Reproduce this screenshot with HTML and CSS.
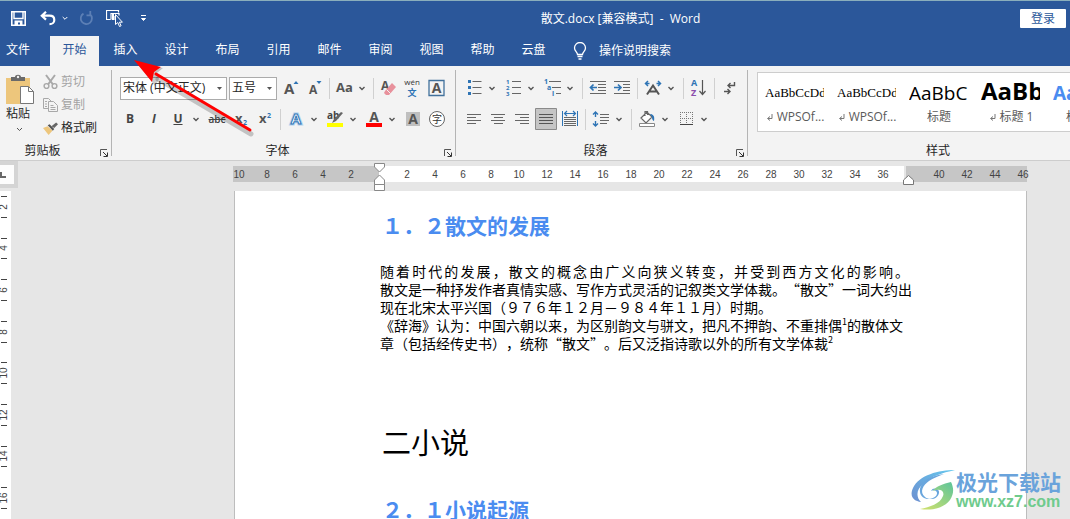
FILE: index.html
```html
<!DOCTYPE html>
<html lang="zh-CN">
<head>
<meta charset="utf-8">
<title>散文.docx - Word</title>
<link rel="stylesheet" href="styles.css">
</head>
<body>
<svg class="defs" aria-hidden="true">
  <symbol id="chev" viewBox="0 0 15 24"><path d="M3.5 11l2.5 2.500 2.500-2.500" fill="none" stroke="#555" stroke-width="1.400"/></symbol>
  <symbol id="launch" viewBox="0 0 10 10"><path d="M1.500 8V1.500H8" fill="none" stroke="#555"/><path d="M4 4l4 4M8.500 4.500v4h-4" fill="none" stroke="#333"/></symbol>
  <symbol id="ret" viewBox="0 0 8 9"><path d="M6 1v4.500H2M4 3.500l-2.500 2L4 7.500" fill="none" stroke="#777"/></symbol>
</svg>

<header class="titlebar">
  <div class="quick">
    <button class="q" aria-label="保存"><svg width="15" height="15" viewBox="0 0 15 15"><path d="M.8.800h13.400v13.400H.8z" fill="none" stroke="#fff" stroke-width="1.600"/><path d="M3 1v6.500h9V1" fill="none" stroke="#fff" stroke-width="1.400"/><path d="M3.500 9.500h8V14H9v-2.500H7V14H3.500z" fill="#fff"/></svg></button>
    <button class="q undo" aria-label="撤消"><svg width="16" height="15" viewBox="0 0 16 15"><path d="M6 .8L1.800 4.700 6 8.600M2 4.700h7.500c3 0 4.800 1.700 4.800 4.200S12.300 13.200 9.500 13.200" fill="none" stroke="#fff" stroke-width="2.200"/></svg></button>
    <button class="q small" aria-label="撤消选项"><svg width="6" height="5" viewBox="0 0 6 5"><path d="M.7 1l2.300 2.300L5.300 1" fill="none" stroke="#fff"/></svg></button>
    <button class="q redo" aria-label="重复"><svg width="15" height="15" viewBox="0 0 15 15"><path d="M4.500 2.600A5.600 5.600 0 1 0 11 3.200M11.300 0v4.300H7.500" fill="none" stroke="#5c7fb5" stroke-width="1.800"/></svg></button>
    <button class="q touch" aria-label="选择对象"><svg width="18" height="17" viewBox="0 0 18 17"><path d="M4.500 9.500h-4v-9h12v2M5 9.500v-6h8v2M8 6v4" fill="none" stroke="#fff" stroke-width="1.200"/><path d="M6 4h2v6H6z" fill="#fff"/><path d="M9.500 4.500v10l2.300-2 1.700 4 1.600-.7-1.700-3.600h3z" fill="#2b579a" stroke="#fff"/></svg></button>
    <button class="q small" aria-label="自定义快速访问工具栏"><svg width="7" height="7" viewBox="0 0 7 7"><path d="M1 .5h5M1.500 3.500h4L3.500 5.500z" fill="#fff" stroke="#fff"/></svg></button>
  </div>
  <div class="doc-title">散文.docx [兼容模式]&nbsp; -&nbsp; Word</div>
  <button class="login">登录</button>
</header>

<nav class="tabs">
  <button class="tab file">文件</button>
  <button class="tab active">开始</button>
  <button class="tab">插入</button>
  <button class="tab">设计</button>
  <button class="tab">布局</button>
  <button class="tab">引用</button>
  <button class="tab">邮件</button>
  <button class="tab">审阅</button>
  <button class="tab">视图</button>
  <button class="tab">帮助</button>
  <button class="tab">云盘</button>
  <button class="tell"><svg width="14" height="18" viewBox="0 0 14 18"><path d="M4.500 12.500c0-2.500-3-3.500-3-6.500a5.500 5.500 0 0 1 11 0c0 3-3 4-3 6.500zM4.500 14.500h5M5.500 17h3" fill="none" stroke="#fff" stroke-width="1.300"/></svg>操作说明搜索</button>
</nav>

<section class="ribbon">
  <div class="group clipboard">
    <div class="clip-body">
      <button class="paste">
        <svg width="28" height="31" viewBox="0 0 28 31"><path d="M0 4h24v26H0z" fill="#edc67c"/><path d="M5 7V3h4c0-3 6-3 6 0h4v4z" fill="#6a6a6a"/><circle cx="12" cy="3" r="1.200" fill="#f3f3f3"/><path d="M14.500 12.500h8l5 5v12h-13z" fill="#fff" stroke="#777"/><path d="M22.500 12.500v5h5" fill="none" stroke="#777"/></svg>
        <span>粘贴</span>
        <svg width="7" height="5" viewBox="0 0 7 5"><path d="M1 1l2.500 2.500L6 1" fill="none" stroke="#555"/></svg>
      </button>
      <div class="clip-list">
        <button class="clip" disabled><svg width="15" height="16" viewBox="0 0 15 16"><path d="M3 1l7 9.500M12 1L5 10.500" fill="none" stroke="#a8a8a8" stroke-width="2"/><circle cx="3.500" cy="12" r="2.400" fill="none" stroke="#a8a8a8" stroke-width="1.400"/><circle cx="11.500" cy="12" r="2.400" fill="none" stroke="#a8a8a8" stroke-width="1.400"/></svg>剪切</button>
        <button class="clip" disabled><svg width="15" height="16" viewBox="0 0 15 16"><path d="M5.500 11.500h-5v-10h5l3 3" fill="none" stroke="#a8a8a8"/><path d="M5.500 4.500h5l4 4v6h-9z" fill="#f3f3f3" stroke="#a8a8a8"/><path d="M2 4.500h2M2 7h2M2 9.500h2M7.500 8.500h3M7.500 10.500h5M7.500 12.500h5" stroke="#a8a8a8"/></svg>复制</button>
        <button class="clip"><svg width="16" height="15" viewBox="0 0 16 15"><path d="M0 7l5-2 5 5-4 4.500z" fill="#edc67c"/><path d="M5 4l2-1 5 5-1.500 2z" fill="#555"/><path d="M9 5l5-4 2 2-4 4z" fill="#666"/></svg>格式刷</button>
      </div>
    </div>
    <div class="foot"><span class="foot-label">剪贴板</span><button class="launch" aria-label="剪贴板选项"><svg width="10" height="10"><use href="#launch"/></svg></button></div>
  </div>

  <div class="group font">
    <div class="rows">
      <div class="row row-font">
        <label class="combo family"><select aria-label="字体"><option>宋体 (中文正文)</option></select><svg width="5" height="3" viewBox="0 0 5 3"><path d="M0 0h5L2.500 3z" fill="#555"/></svg></label>
        <label class="combo size"><select aria-label="字号"><option>五号</option></select><svg width="5" height="3" viewBox="0 0 5 3"><path d="M0 0h5L2.500 3z" fill="#555"/></svg></label>
        <button class="b" aria-label="增大字号"><svg width="24" height="24"><text class="ico" x="5" y="18" font-size="15">A</text><path d="M14.500 8h5L17 5z" fill="#2e74b5"/></svg></button>
        <button class="b" aria-label="减小字号"><svg width="24" height="24"><text class="ico" x="6" y="18" font-size="12">A</text><path d="M13.500 5h5L16 8z" fill="#2e74b5"/></svg></button>
        <i class="sep"></i>
        <button class="b" aria-label="更改大小写"><svg width="24" height="24"><text class="ico" x="4" y="16" font-size="13">Aa</text></svg></button>
        <button class="c" aria-label="大小写选项"><svg width="15" height="24"><use href="#chev"/></svg></button>
        <i class="sep"></i>
        <button class="b" aria-label="清除格式"><svg width="24" height="24"><text class="ico" x="5" y="14" font-size="12">A</text><path d="M9 15l7-8 4 4-7 8h-3l-2-2z" fill="#e8919c"/><path d="M10.500 13.500l4 4" stroke="#f3f3f3"/></svg></button>
        <button class="b" aria-label="拼音指南"><svg width="24" height="24"><text x="12" y="9" font-size="8" text-anchor="middle" fill="#333">wén</text><text x="12" y="20" font-size="9" font-weight="700" text-anchor="middle" fill="#2e74b5">文</text></svg></button>
        <button class="b" aria-label="字符边框"><svg width="24" height="24"><path d="M5 4.500h15v15H5z" fill="none" stroke="#41719c" stroke-width="1.300"/><text class="ico" x="12.500" y="17" font-size="14" text-anchor="middle">A</text></svg></button>
      </div>
      <div class="row row-format">
        <button class="b"><b>B</b></button>
        <button class="b"><em>I</em></button>
        <button class="b"><u>U</u></button>
        <button class="c" aria-label="下划线选项"><svg width="15" height="24"><use href="#chev"/></svg></button>
        <button class="b"><s>abc</s></button>
        <button class="b" aria-label="下标"><svg width="24" height="24"><text class="ico" x="6" y="16" font-size="13">x</text><text x="14" y="18" font-size="7" font-weight="700" fill="#2e74b5">2</text></svg></button>
        <button class="b" aria-label="上标"><svg width="24" height="24"><text class="ico" x="6" y="16" font-size="13">x</text><text x="14" y="11" font-size="7" font-weight="700" fill="#2e74b5">2</text></svg></button>
        <i class="sep"></i>
        <button class="b" aria-label="文本效果"><svg width="24" height="24"><text x="12" y="17" font-size="15" font-weight="700" text-anchor="middle" fill="#fff" stroke="#b4d2ee" stroke-width="3">A</text><text x="12" y="17" font-size="15" font-weight="700" text-anchor="middle" fill="#fff" stroke="#2e74b5" stroke-width="1">A</text></svg></button>
        <button class="c" aria-label="文本效果选项"><svg width="15" height="24"><use href="#chev"/></svg></button>
        <button class="b" aria-label="突出显示"><svg width="24" height="24"><path d="M4 16h16v4H4z" fill="#ff0"/><text x="4" y="12" font-size="10" font-weight="700" fill="#444">ab</text><path d="M18 5l2 1-7 8-4 2 2-4z" fill="#666"/></svg></button>
        <button class="c" aria-label="突出显示选项"><svg width="15" height="24"><use href="#chev"/></svg></button>
        <button class="b" aria-label="字体颜色"><svg width="24" height="24"><text class="ico" x="12" y="15" font-size="14" text-anchor="middle">A</text><path d="M4 16h16v4H4z" fill="red"/></svg></button>
        <button class="c" aria-label="字体颜色选项"><svg width="15" height="24"><use href="#chev"/></svg></button>
        <button class="b" aria-label="字符底纹"><svg width="24" height="24"><path d="M5 5h14v14H5z" fill="#bfbfbf"/><text class="ico" x="12" y="17" font-size="14" text-anchor="middle">A</text></svg></button>
        <button class="b" aria-label="带圈字符"><svg width="24" height="24"><circle cx="12" cy="12" r="7.500" fill="#fff" stroke="#666"/><text x="12" y="15.500" font-size="10" text-anchor="middle" fill="#333">字</text></svg></button>
      </div>
    </div>
    <div class="foot"><span class="foot-label">字体</span><button class="launch" aria-label="字体选项"><svg width="10" height="10"><use href="#launch"/></svg></button></div>
  </div>

  <div class="group para">
    <div class="rows">
      <div class="row">
        <button class="b" aria-label="项目符号"><svg width="24" height="24"><path d="M10.500 5.500h9M10.500 11.500h9M10.500 17.500h9" stroke="#666"/><path d="M6 4h3v3H6zM6 10h3v3H6zM6 16h3v3H6z" fill="#2e74b5"/></svg></button>
        <button class="c" aria-label="项目符号选项"><svg width="15" height="24"><use href="#chev"/></svg></button>
        <button class="b" aria-label="编号"><svg width="24" height="24"><path d="M11 5.500h9M11 11.500h9M11 17.500h9" stroke="#666"/><g font-size="6" font-weight="700" fill="#2e74b5"><text x="5" y="8">1</text><text x="5" y="14">2</text><text x="5" y="20">3</text></g></svg></button>
        <button class="c" aria-label="编号选项"><svg width="15" height="24"><use href="#chev"/></svg></button>
        <button class="b" aria-label="多级列表"><svg width="24" height="24"><path d="M9 5.500h12M12 11.500h9M16 17.500h5" stroke="#666"/><g font-size="7" font-weight="700" fill="#2e74b5"><text x="4" y="8">1</text><text x="7" y="14">a</text><text x="12" y="20">i</text></g></svg></button>
        <button class="c" aria-label="多级列表选项"><svg width="15" height="24"><use href="#chev"/></svg></button>
        <i class="sep"></i>
        <button class="b" aria-label="减少缩进"><svg width="24" height="24"><path d="M4 5.500h16M12 8.500h8M12 11.500h8M12 14.500h8M4 17.500h16" stroke="#666"/><path d="M5 11.500h6M7.500 8.500l-3 3 3 3" fill="none" stroke="#2e74b5" stroke-width="1.700"/></svg></button>
        <button class="b" aria-label="增加缩进"><svg width="24" height="24"><path d="M4 5.500h16M13 8.500h7M13 11.500h7M13 14.500h7M4 17.500h16" stroke="#666"/><path d="M4 11.500h6M8 8.500l3 3-3 3" fill="none" stroke="#2e74b5" stroke-width="1.700"/></svg></button>
        <i class="sep"></i>
        <button class="b" aria-label="中文版式"><svg width="24" height="24"><path d="M6 18.500l6-9 6 9M8.500 15.500h7" fill="none" stroke="#555" stroke-width="2"/><path d="M4.500 7.500h4M7 5L4.500 7.500 7 10M19.500 7.500h-4M17 5l2.500 2.500L17 10" fill="none" stroke="#2e74b5" stroke-width="1.500"/></svg></button>
        <button class="c" aria-label="中文版式选项"><svg width="15" height="24"><use href="#chev"/></svg></button>
        <i class="sep"></i>
        <button class="b" aria-label="排序"><svg width="24" height="24"><text x="4" y="10" font-size="9" font-weight="700" fill="#2e74b5">A</text><text x="4" y="20" font-size="9" font-weight="700" fill="#8b4fad">Z</text><path d="M15.500 4v14M12.500 15l3 3.500 3-3.500" fill="none" stroke="#555" stroke-width="1.200"/></svg></button>
        <i class="sep"></i>
        <button class="b" aria-label="显示编辑标记"><svg width="24" height="24"><path d="M16.500 6v3.500h-6M12.500 7L10 9.500l2.500 2.500M6 15.500h6M9.500 13l2.500 2.500-2.500 2.500" fill="none" stroke="#555" stroke-width="1.400"/></svg></button>
      </div>
      <div class="row">
        <button class="b" aria-label="左对齐"><svg width="24" height="24"><path d="M5 7.500h14M5 10.500h9M5 13.500h14M5 16.500h9" stroke="#666"/></svg></button>
        <button class="b" aria-label="居中"><svg width="24" height="24"><path d="M5 7.500h14M8 10.500h9M5 13.500h14M8 16.500h9" stroke="#666"/></svg></button>
        <button class="b" aria-label="右对齐"><svg width="24" height="24"><path d="M5 7.500h14M10 10.500h9M5 13.500h14M10 16.500h9" stroke="#666"/></svg></button>
        <button class="b" aria-label="两端对齐" aria-pressed="true"><svg width="24" height="24"><path d="M1.500 1.500h21v21h-21z" fill="#c5c5c5" stroke="#8a8a8a"/><path d="M5 7.500h14M5 10.500h14M5 13.500h14M5 16.500h14" stroke="#555"/></svg></button>
        <button class="b" aria-label="分散对齐"><svg width="24" height="24"><path d="M4.500 4v15M19.500 4v15" stroke="#2e74b5"/><path d="M7 6.500h10M9 4L6.500 6.500 9 9M15 4l2.500 2.500L15 9" fill="none" stroke="#2e74b5" stroke-width="1.200"/><path d="M6 10.500h12M6 12.500h12M6 14.500h12M6 16.500h12M6 18.500h12" stroke="#666"/></svg></button>
        <i class="sep"></i>
        <button class="b" aria-label="行距"><svg width="24" height="24"><path d="M11 7.500h9M11 10.500h9M11 13.500h9M11 16.500h7" stroke="#666"/><path d="M6.500 5v5M6.500 14v5M4 7.500L6.500 5 9 7.500M4 16.500L6.500 19 9 16.500" fill="none" stroke="#2e74b5" stroke-width="1.400"/></svg></button>
        <button class="c" aria-label="行距选项"><svg width="15" height="24"><use href="#chev"/></svg></button>
        <i class="sep"></i>
        <button class="b" aria-label="底纹"><svg width="24" height="24"><path d="M6 11l6-6 5 5-6 6zM10 9V4.500h2.500V8" fill="#fff" stroke="#666" stroke-width="1.200"/><path d="M15 7c3 0 5 2 4 7-1.500-.5-2-2-2-4z" fill="#2e74b5"/><path d="M4.500 16.500h15v3h-15z" fill="#fff" stroke="#888"/></svg></button>
        <button class="c" aria-label="底纹选项"><svg width="15" height="24"><use href="#chev"/></svg></button>
        <button class="b" aria-label="边框"><svg width="24" height="24"><path d="M6 5.500h12M6 11.500h12M6.500 5v12M12.500 5v12M18.500 5v12" stroke="#777" stroke-dasharray="1 1"/><path d="M6 17.500h13" stroke="#444"/></svg></button>
        <button class="c" aria-label="边框选项"><svg width="15" height="24"><use href="#chev"/></svg></button>
      </div>
    </div>
    <div class="foot"><span class="foot-label">段落</span><button class="launch" aria-label="段落选项"><svg width="10" height="10"><use href="#launch"/></svg></button></div>
  </div>

  <div class="group styles">
    <div class="gallery">
      <button class="style"><span class="sample song">AaBbCcDd</span><span class="name"><svg width="8" height="9"><use href="#ret"/></svg> WPSOf...</span></button>
      <button class="style"><span class="sample song">AaBbCcDd</span><span class="name"><svg width="8" height="9"><use href="#ret"/></svg> WPSOf...</span></button>
      <button class="style"><span class="sample title">AaBbC</span><span class="name">标题</span></button>
      <button class="style"><span class="sample h1">AaBb</span><span class="name"><svg width="8" height="9"><use href="#ret"/></svg> 标题 1</span></button>
      <button class="style"><span class="sample h2">AaBb</span><span class="name">标题 2</span></button>
    </div>
    <div class="foot"><span class="foot-label">样式</span></div>
  </div>
</section>

<main class="work">
  <div class="rail">
    <div class="corner"><button class="tabstop" aria-label="制表符"><svg width="6" height="6"><path d="M1 0v5h5" fill="none" stroke="#666" stroke-width="2"/></svg></button></div>
    <svg class="vruler" width="12" height="340">
      <path d="M0 0h11v340H0z" fill="#fff"/>
      <path d="M1 5.500h6M1 26.500h6M1 47.500h6M1 67.500h6M1 88.500h6M1 109.500h6M1 130.500h6M1 151.500h6M1 171.500h6M1 192.500h6M1 213.500h6M1 234.500h6M1 255.500h6M1 275.500h6M1 296.500h6M1 317.500h6" stroke="#444"/>
      <g text-anchor="middle" font-size="10" fill="#444">
        <text transform="translate(7 16) rotate(-90)">2</text>
        <text transform="translate(7 57) rotate(-90)">4</text>
        <text transform="translate(7 99) rotate(-90)">6</text>
        <text transform="translate(7 141) rotate(-90)">8</text>
        <text transform="translate(7 182) rotate(-90)">10</text>
        <text transform="translate(7 224) rotate(-90)">12</text>
        <text transform="translate(7 265) rotate(-90)">14</text>
        <text transform="translate(7 307) rotate(-90)">16</text>
      </g>
    </svg>
  </div>
  <div class="canvas">
    <div class="hruler">
      <div class="seg before"><span>10</span><span>8</span><span>6</span><span>4</span><span>2</span></div>
      <div class="seg inside"><span>2</span><span>4</span><span>6</span><span>8</span><span>10</span><span>12</span><span>14</span><span>16</span><span>18</span><span>20</span><span>22</span><span>24</span><span>26</span><span>28</span><span>30</span><span>32</span><span>34</span><span>36</span></div>
      <div class="seg after"><span>40</span><span>42</span><span>44</span><span>46</span></div>
      <svg class="mark indent" width="12" height="30"><path d="M.5.500h10v3.500l-5 5-5-5zM.5 21.500v-4.500l5-5 5 5v4.500zM.5 21.500h10v6H.5z" fill="#fff" stroke="#888"/></svg>
      <svg class="mark right" width="12" height="12"><path d="M.5 9.500V5l5-4.500 5 4.500v4.500z" fill="#fff" stroke="#777"/></svg>
    </div>
    <article class="page">
      <h2>１．２散文的发展</h2>
      <p class="spread">随着时代的发展，散文的概念由广义向狭义转变，并受到西方文化的影响。</p>
      <p>散文是一种抒发作者真情实感、写作方式灵活的记叙类文学体裁。“散文”一词大约出<br>现在北宋太平兴国（９７６年１２月－９８４年１１月）时期。</p>
      <p>《辞海》认为：中国六朝以来，为区别韵文与骈文，把凡不押韵、不重排偶<sup>1</sup>的散体文<br>章（包括经传史书），统称“散文”。后又泛指诗歌以外的所有文学体裁<sup>2</sup></p>
      <h1>二小说</h1>
      <h2>２．１小说起源</h2>
    </article>
  </div>
</main>

<svg class="arrow" width="130" height="84" viewBox="0 0 130 84" aria-hidden="true">
  <path d="M24 19l93 55" stroke="#0003" stroke-width="5" stroke-linecap="round"/>
  <path d="M3 3l26 5-6 5 2 6-4 7z" fill="#0003"/>
  <path d="M22 14l94 56" stroke="#f00" stroke-width="3" stroke-linecap="round"/>
  <path d="M0 0l27 7-7 5-2 10z" fill="#f00"/>
</svg>

<div class="watermark">
  <svg width="45" height="42" viewBox="0 0 45 42" aria-hidden="true">
    <defs>
      <linearGradient id="wb" x1="0" y1="1" x2="1" y2="0"><stop offset="0" stop-color="#6d8fd0"/><stop offset="1" stop-color="#66c8ee"/></linearGradient>
      <linearGradient id="wg" x1="0" y1="1" x2="1" y2="0"><stop offset="0" stop-color="#d5e26b"/><stop offset="1" stop-color="#5cc49b"/></linearGradient>
    </defs>
    <path d="M44 1C28 1 8 6 2 19c-4 9 1 13 8 14-5-5-5-12 2-18C20 7 31 4 44 1z" fill="url(#wb)"/>
    <path d="M33 5C17 7 8 14 9 23c1 8 11 9 16 4 3-4-1-7-5-5 2-5 9-2 8 2-1 6-9 8-14 4-6-5-2-12 4-16 4-3 10-5 15-7z" fill="#6aa6dd"/>
    <path d="M40 13c-8 2-15 4-18 9 7-3 12 0 10 5-3 8-13 11-23 13 12 2 24-1 30-9 4-6 4-12 1-18z" fill="url(#wg)"/>
  </svg>
  <div class="wm-text"><span class="wm-cn">极光下载站</span><span class="wm-url">www.xz7.com</span></div>
</div>
</body>
</html>
```
FILE: styles.css
```css
* { box-sizing: border-box; }
body {
  margin: 0;
  height: 100vh;
  overflow: hidden;
  position: relative;
  display: flex;
  flex-direction: column;
  background: #e6e6e6;
  font: 12px/16px "Open Sans", "Noto Sans CJK SC", sans-serif;
  color: #262626;
}
button {
  margin: 0;
  padding: 0;
  border: 0;
  background: none;
  font: inherit;
  color: inherit;
}
svg { display: block; flex: none; }
.defs { position: absolute; width: 0; height: 0; }

.titlebar {
  flex: none;
  display: flex;
  align-items: center;
  height: 36px;
  border-top: 1px solid #8aaebc;
  background: #2b579a;
  color: #fff;
  padding: 0 2px 0 11px;
}
.quick { display: flex; align-items: center; width: 210px; }
.undo { margin-left: 14px; }
.small { margin-left: 6px; }
.redo { margin-left: 11px; }
.touch { margin-left: 12px; }
.touch + .small { margin-left: 16px; }
.doc-title { flex: 1; text-align: center; font-size: 12px; white-space: nowrap; }
.login {
  width: 46px;
  height: 19px;
  border-radius: 1px;
  background: #fff;
  color: #2b579a;
  margin-right: 2px;
}

.tabs {
  flex: none;
  display: flex;
  gap: 2px;
  height: 30px;
  background: #2b579a;
  color: #fff;
}
.tab { width: 49px; padding-bottom: 2px; }
.tab.file { width: 48px; padding-left: 6px; text-align: left; }
.tab.active { background: #f3f3f3; color: #2b579a; }
.tell { display: flex; align-items: center; gap: 12px; margin-left: 13px; white-space: nowrap; }

.ribbon {
  flex: none;
  display: flex;
  height: 95px;
  background: #f3f3f3;
  border-bottom: 1px solid #cdcdcd;
}
.group { flex: none; position: relative; display: flex; flex-direction: column; }
.group:not(.styles)::after {
  content: "";
  position: absolute;
  right: 0;
  top: 4px;
  bottom: 4px;
  width: 1px;
  background: #b4b4b4;
}
.clipboard { width: 112px; }
.font { width: 344px; }
.para { width: 292px; }
.styles { flex: 1; min-width: 0; overflow: hidden; }
.foot { display: flex; align-items: center; height: 18px; }
.foot-label { flex: 1; text-align: center; }
.clipboard .foot-label { padding-right: 14px; }
.styles .foot-label { padding-left: 58px; }
.launch { width: 13px; padding-top: 4px; }

.clip-body { display: flex; height: 76px; padding: 8px 0 0 6px; gap: 9px; }
.paste { display: flex; flex-direction: column; align-items: flex-start; gap: 1px; width: 28px; }
.paste svg:last-child { margin: 4px 0 0 10px; }
.clip-list { display: flex; flex-direction: column; gap: 7px; }
.clip { display: flex; align-items: center; gap: 3px; height: 16px; }
.clip svg { width: 15px; }
.clip:disabled { color: #a3a3a3; }

.rows { display: flex; flex-direction: column; gap: 7px; height: 76px; padding: 10px 0 0 6px; }
.row { display: flex; align-items: center; height: 24px; }
.row-font { padding-left: 2px; }
.b { width: 24px; height: 24px; flex: none; font-size: 12px; color: #444; }
.c { width: 15px; height: 24px; flex: none; }
.ico { font-weight: 700; fill: #555; }
.b b, .b em, .b u { font-weight: 700; }
.b s { font-size: 10px; font-weight: 600; }
.sep { width: 1px; height: 21px; margin: 0 3px; background: #d0d0d0; }
.row-font .sep { margin: 0 2px; }
.combo {
  display: grid;
  align-items: center;
  height: 23px;
  margin-right: 2px;
  border: 1px solid #ababab;
  background: #fff;
}
.combo select, .combo svg { grid-area: 1 / 1; }
.combo select {
  appearance: none;
  border: 0;
  margin: 0;
  padding: 0 0 0 2px;
  width: 100%;
  background: none;
  font: inherit;
  color: #262626;
}
.combo svg { justify-self: end; margin-right: 4px; }
.family { width: 107px; }
.size { width: 48px; }

.gallery {
  display: flex;
  height: 60px;
  margin: 6px 0 10px 9px;
  border: 1px solid #cdcdcd;
  border-right: 0;
  background: #fff;
  overflow: hidden;
}
.style { flex: none; width: 72px; padding: 0 6px 0 7px; display: flex; flex-direction: column; }
.sample {
  width: 59px;
  height: 32px;
  overflow: hidden;
  white-space: nowrap;
  text-align: left;
  color: #000;
  line-height: 40px;
}
.song { font-family: "Liberation Serif", serif; font-size: 13px; }
.title { font-size: 19px; }
.h1 { font-size: 24px; font-weight: 700; line-height: 36px; }
.h2 { font-size: 19px; font-weight: 700; color: #4a8cf0; }
.name {
  display: flex;
  align-items: center;
  justify-content: center;
  gap: 3px;
  width: 60px;
  height: 24px;
  white-space: nowrap;
  color: #5a5a5a;
}

.work { flex: 1; min-height: 0; display: flex; overflow: hidden; }
.rail { width: 18px; flex: none; }
.corner { height: 27px; padding: 4px 4px 4px 0; background: #d4d4d4; margin-bottom: 3px; }
.tabstop { width: 14px; height: 19px; background: #fcfcfc; display: flex; align-items: center; }
.vruler, .hruler { font-family: "Liberation Sans", sans-serif; }
.canvas { flex: 1; min-width: 0; margin: 0 43px 0 215px; display: flex; flex-direction: column; }
.hruler {
  position: relative;
  flex: none;
  display: flex;
  height: 16px;
  margin: 5px 0 9px;
  font-size: 10px;
  line-height: 17px;
  color: #444;
}
.seg { display: flex; flex: none; }
.seg span { width: 28px; text-align: center; flex: none; }
.before { width: 146px; background: #c6c6c6; }
.before span:first-child { margin-left: -8px; }
.inside { width: 525px; padding-left: 14px; background: #fff; }
.after { flex: 1; min-width: 0; margin-left: 2px; padding-left: 19px; background: #c6c6c6; }
.mark { position: absolute; }
.indent { left: 141px; top: -3px; }
.right { left: 670px; top: 9px; }
.page {
  flex: 1;
  margin-left: 1px;
  padding: 19px 117px 0 145px;
  border: solid #bdbdbd;
  border-width: 0 1px;
  background: #fff;
  font-family: "Noto Sans CJK SC", sans-serif;
  font-size: 14px;
  line-height: 18px;
  color: #000;
  text-spacing-trim: space-all;
  white-space: nowrap;
}
.page p { margin: 0; }
.page .spread { white-space: normal; text-align: justify; text-align-last: justify; }
.page sup { font-size: 9px; line-height: 0; }
.page h2 { margin: 0 0 22px 2px; font-size: 21px; line-height: 30px; color: #4a8cf0; }
.page h1 { margin: 68px 0 32px 2px; font-size: 29px; line-height: 42px; font-weight: 400; }

.arrow { position: absolute; left: 134px; top: 60px; }
.watermark { position: absolute; right: 9px; bottom: 8px; display: flex; }
.wm-text { display: flex; flex-direction: column; font-weight: 700; }
.wm-cn { font: 700 21px/24px "Noto Sans CJK SC", sans-serif; color: #6aa3db; }
.wm-url { font: 700 16px/18px "Liberation Sans", sans-serif; color: #6fcb8d; }
```
